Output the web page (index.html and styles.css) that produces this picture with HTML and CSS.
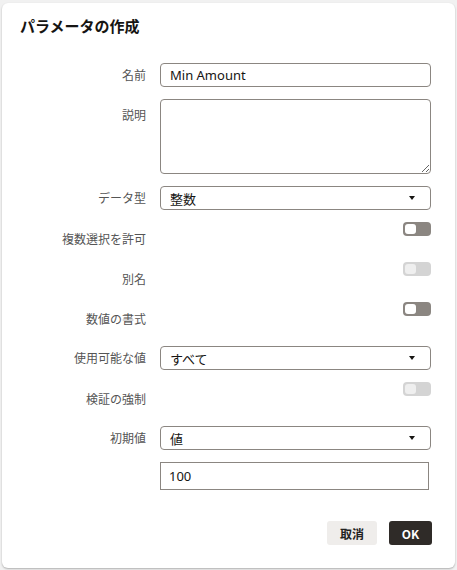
FILE: index.html
```html
<!DOCTYPE html>
<html lang="ja">
<head>
<meta charset="utf-8">
<link rel="stylesheet" href="styles.css">
</head>
<body>
<div class="dialog">
  <h1 class="title">パラメータの作成</h1>
  <div class="form">
    <div class="row row-field">
      <span class="label">名前</span>
      <div class="input">Min Amount</div>
    </div>
    <div class="row row-area">
      <span class="label">説明</span>
      <textarea class="area"></textarea>
    </div>
    <div class="row row-field">
      <span class="label">データ型</span>
      <div class="input select"><span>整数</span><span class="caret"></span></div>
    </div>
    <div class="row row-toggle">
      <span class="label">複数選択を許可</span>
      <span class="toggle"><span class="knob"></span></span>
    </div>
    <div class="row row-toggle">
      <span class="label">別名</span>
      <span class="toggle disabled"><span class="knob"></span></span>
    </div>
    <div class="row row-toggle">
      <span class="label">数値の書式</span>
      <span class="toggle"><span class="knob"></span></span>
    </div>
    <div class="row row-field">
      <span class="label">使用可能な値</span>
      <div class="input select"><span>すべて</span><span class="caret"></span></div>
    </div>
    <div class="row row-toggle">
      <span class="label">検証の強制</span>
      <span class="toggle disabled"><span class="knob"></span></span>
    </div>
    <div class="row row-field">
      <span class="label">初期値</span>
      <div class="input select"><span>値</span><span class="caret"></span></div>
    </div>
    <div class="row row-value">
      <span class="label"></span>
      <div class="value">100</div>
    </div>
  </div>
  <div class="actions">
    <button class="btn btn-cancel">取消</button>
    <button class="btn btn-ok">OK</button>
  </div>
</div>
</body>
</html>
```
FILE: styles.css
```css
* { box-sizing: border-box; }
html, body { margin: 0; padding: 0; }
body {
  background: #f1f1f1;
  font-family: "Noto Sans", "Noto Sans CJK JP", sans-serif;
  color: #222;
  height: 570px;
  overflow: hidden;
}
.dialog {
  margin: 3px 2px 0 2px;
  width: 453px;
  height: 565px;
  background: #fff;
  border-radius: 6px;
  box-shadow: 0 1px 2px rgba(0,0,0,0.28);
  padding: 13px 24px 0 18px;
}
.title {
  margin: 0;
  font-size: 15px;
  line-height: 20px;
  font-weight: 700;
  color: #161513;
  font-family: "Noto Sans CJK JP", sans-serif;
}
.form {
  margin-top: 27px;
  display: flex;
  flex-direction: column;
  gap: 12px;
}
.row {
  display: grid;
  grid-template-columns: 126px 1fr;
  column-gap: 14px;
}
.label {
  text-align: right;
  font-size: 12px;
  line-height: 16px;
  color: #555;
  font-family: "Noto Sans CJK JP", sans-serif;
}
.row-field { height: 24px; align-items: center; }
.row-area { height: 75px; }
.row-area .label { padding-top: 8px; }
.row-toggle { height: 28px; }
.row-toggle .label { padding-top: 9px; }
.row-toggle + .row-field { margin-top: 4px; }
.row-value { height: 28px; }

.input {
  height: 24px;
  border: 1px solid #8b8681;
  border-radius: 4px;
  padding: 0 9px;
  display: flex;
  align-items: center;
  font-size: 13px;
  color: #161513;
}
.select { justify-content: space-between; padding-right: 15px; }
.caret {
  width: 0; height: 0;
  border-left: 3.5px solid transparent;
  border-right: 3.5px solid transparent;
  border-top: 4px solid #161513;
}
.area {
  display: block;
  width: 100%;
  height: 75px;
  border: 1px solid #8b8681;
  border-radius: 4px;
  resize: vertical;
  font: inherit;
  margin: 0;
}
.toggle {
  justify-self: end;
  width: 28px;
  height: 14px;
  border-radius: 4px;
  background: #8b8681;
  display: flex;
  align-items: center;
  padding-left: 2px;
}
.knob {
  width: 11px;
  height: 10px;
  border-radius: 3px;
  background: #fff;
}
.toggle.disabled { background: #d4d4d4; }
.toggle.disabled .knob { background: #efefef; }
.value {
  width: 269px;
  height: 28px;
  border: 1px solid #8b8681;
  padding: 0 8px;
  display: flex;
  align-items: center;
  font-size: 13px;
  color: #161513;
}
.actions {
  margin-top: 31px;
  display: flex;
  justify-content: flex-end;
  gap: 12px;
  margin-right: -1px;
}
.btn {
  height: 24px;
  border: none;
  border-radius: 3px;
  font-family: "Noto Sans CJK JP", sans-serif;
  font-weight: 700;
  font-size: 12px;
  padding: 0;
}
.btn-cancel { width: 50px; background: #efedeb; color: #222; }
.btn-ok { width: 43px; background: #2f2b28; color: #fff; }
```
